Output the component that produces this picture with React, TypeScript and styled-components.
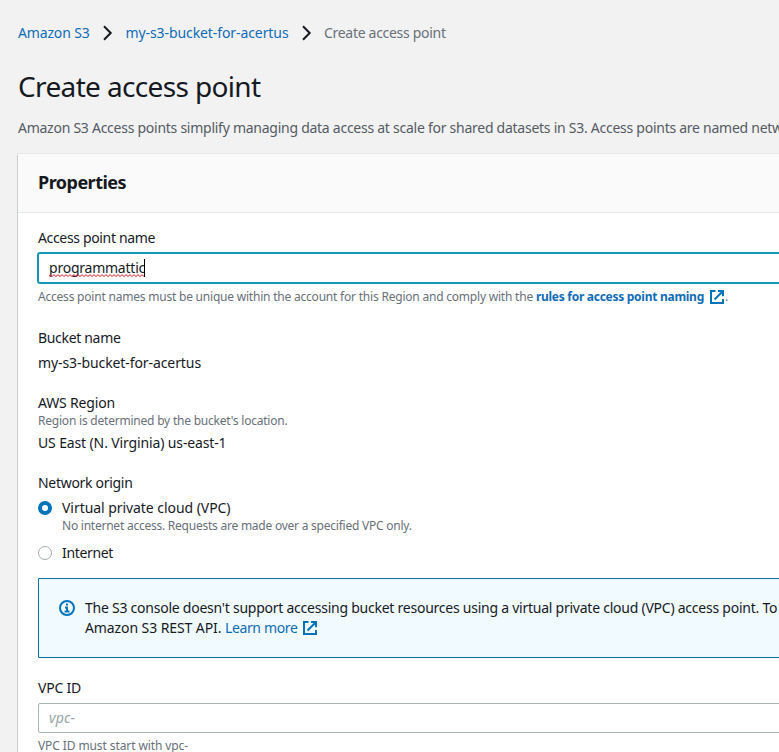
import React from "react";
import styled, { createGlobalStyle } from "styled-components";

const GlobalStyle = createGlobalStyle`
  * { box-sizing: border-box; }
  body { margin: 0; background: #f2f2f2; }
`;

const Page = styled.main`
  width: 100%;
  height: 752px;
  overflow: hidden;
  padding: 23px 0 0 18px;
  background: #f2f2f2;
  color: #16191f;
  font: 14px/20px "Noto Sans", "Open Sans", sans-serif;
  white-space: nowrap;
`;

const Text = styled.span<{ $track?: number }>`
  letter-spacing: ${(p) => p.$track ?? -0.25}px;
`;

const Breadcrumbs = styled.nav`
  display: flex;
  height: 20px;
`;

const Crumb = styled.a<{ $width: number; $track: number }>`
  width: ${(p) => p.$width}px;
  color: #0f6cb6;
  letter-spacing: ${(p) => p.$track}px;
`;

const CurrentCrumb = styled(Text)`
  color: #687078;
`;

const Chevron = styled.svg`
  flex: none;
  width: 10px;
  height: 16px;
  margin: 2px 12.5px 0;
`;

const Title = styled.h1`
  margin: 25px 0 0;
  font-size: 28px;
  line-height: 36px;
  font-weight: 400;
  letter-spacing: -0.64px;
`;

const Intro = styled.p`
  margin: 14px 0 0;
  color: #545b64;
  letter-spacing: -0.26px;
`;

const Panel = styled.section`
  width: 900px;
  margin-top: 16px;
  background: #fff;
  box-shadow: -1px 1px 0 0 #c6cdcc, 0 0 0 1px #e6e7e7;
`;

const PanelHeader = styled.header`
  height: 59px;
  padding: 17px 20px;
  border-bottom: 1px solid #e6e9e9;
  background: #fafafa;
`;

const PanelTitle = styled.h2`
  margin: 0;
  font-size: 18px;
  line-height: 22px;
  font-weight: 700;
  letter-spacing: -0.526px;
`;

const Form = styled.div`
  display: flex;
  flex-direction: column;
  gap: 20px;
  padding: 15px 20px 20px;
`;

const Field = styled.div<{ $after?: number }>`
  display: flex;
  flex-direction: column;
  margin-bottom: ${(p) => p.$after ?? 0}px;
`;

const Label = styled.label<{ $track: number }>`
  height: 20px;
  letter-spacing: ${(p) => p.$track}px;
`;

const Value = styled.div<{ $gap: number; $track: number }>`
  margin-top: ${(p) => p.$gap}px;
  letter-spacing: ${(p) => p.$track}px;
`;

const Hint = styled.div<{ $track: number; $gap?: number }>`
  margin-top: ${(p) => p.$gap ?? 0}px;
  height: 16px;
  color: #687078;
  font-size: 12px;
  line-height: 16px;
  letter-spacing: ${(p) => p.$track}px;
`;

const InputBox = styled.div<{ $focused?: boolean }>`
  display: flex;
  align-items: center;
  height: 30px;
  margin-top: 5px;
  padding: 0 10px;
  border: 1px solid ${(p) => (p.$focused ? "#1299b9" : "#aab3b4")};
  border-radius: 2px;
  box-shadow: ${(p) => (p.$focused ? "0 0 0 1px #1299b9" : "none")};
  background: #fff;
`;

const Typed = styled.span`
  display: grid;
  letter-spacing: -0.232px;
`;

const Stacked = styled.span`
  grid-area: 1 / 1;
`;

const Squiggle = styled.svg`
  grid-area: 1 / 1;
  align-self: end;
  width: 95px;
  height: 3px;
  margin-bottom: 1px;
`;

const Caret = styled.span`
  width: 1px;
  height: 18px;
  margin-left: -1px;
  background: #000;
`;

const Placeholder = styled.span`
  color: #95a5a6;
  font-style: italic;
  letter-spacing: 0.15px;
`;

const RulesLink = styled.a`
  color: #0f6cb6;
  font-weight: 700;
  letter-spacing: -0.275px;
`;

const ExternalSvg = styled.svg<{ $nudge: number }>`
  width: 16px;
  height: 16px;
  margin-left: 5px;
  vertical-align: ${(p) => p.$nudge}px;
`;

const RadioRow = styled.div<{ $gap: number }>`
  display: flex;
  gap: 10px;
  margin-top: ${(p) => p.$gap}px;
`;

const RadioDot = styled.span<{ $checked?: boolean }>`
  flex: none;
  width: 14px;
  height: 14px;
  margin-top: 3px;
  border: ${(p) => (p.$checked ? "4px solid #0073bb" : "1px solid #a3adad")};
  border-radius: 50%;
  background: #fff;
`;

const Alert = styled.div`
  display: flex;
  height: 80px;
  margin-top: -5px;
  padding: 19px 20px;
  border: 1px solid #0b6ea3;
  border-radius: 1px;
  background: #f1faff;
`;

const InfoSvg = styled.svg`
  flex: none;
  width: 16px;
  height: 16px;
  margin: 2px 10px 0 0;
`;

const LearnLink = styled.a`
  color: #0f6cb6;
  letter-spacing: -0.36px;
`;

function Separator() {
  return (
    <Chevron viewBox="0 0 10 16" fill="none" stroke="#16191f" strokeWidth="2">
      <path d="M1 1.2 7.7 8 1 14.8" />
    </Chevron>
  );
}

function ExternalIcon({ nudge }: { nudge: number }) {
  return (
    <ExternalSvg $nudge={nudge} viewBox="0 0 16 16" fill="none" stroke="#0073bb" strokeWidth="2">
      <path d="M6.5 2H2v12h12V10M9 2h5v5.2M13.8 2.2 5.5 10.5" />
    </ExternalSvg>
  );
}

const wave = "M0 2.5" + Array.from({ length: 48 }, (_, i) => `L${i * 2 + 1} ${i % 2 ? 2.5 : 0.7}`).join("");

export default function App() {
  return (
    <Page>
      <GlobalStyle />
      <Breadcrumbs>
        <Crumb $width={72.5} $track={-0.158}>Amazon S3</Crumb>
        <Separator />
        <Crumb $width={163.5} $track={-0.088}>my-s3-bucket-for-acertus</Crumb>
        <Separator />
        <CurrentCrumb $track={-0.3}>Create access point</CurrentCrumb>
      </Breadcrumbs>
      <Title>Create access point</Title>
      <Intro>
        Amazon S3 Access points simplify managing data access at scale for shared datasets in S3. Access points are named
        netw
      </Intro>

      <Panel>
        <PanelHeader>
          <PanelTitle>Properties</PanelTitle>
        </PanelHeader>
        <Form>
          <Field $after={3}>
            <Label $track={-0.345}>Access point name</Label>
            <InputBox $focused>
              <Typed>
                <Stacked>programmattic</Stacked>
                <Squiggle viewBox="0 0 95 3" fill="none" stroke="#d8232a" strokeWidth="1">
                  <path d={wave} />
                </Squiggle>
              </Typed>
              <Caret />
            </InputBox>
            <Hint $track={-0.21} $gap={6}>
              Access point names must be unique within the account for this Region and comply with the{" "}
              <RulesLink>
                rules for access point naming
                <ExternalIcon nudge={-4} />
              </RulesLink>
              .
            </Hint>
          </Field>

          <Field>
            <Label $track={-0.321}>Bucket name</Label>
            <Value $gap={5} $track={-0.088}>my-s3-bucket-for-acertus</Value>
          </Field>

          <Field>
            <Label $track={-0.168}>AWS Region</Label>
            <Hint $track={-0.215}>Region is determined by the bucket's location.</Hint>
            <Value $gap={4} $track={-0.131}>US East (N. Virginia) us-east-1</Value>
          </Field>

          <Field>
            <Label $track={-0.3}>Network origin</Label>
            <RadioRow $gap={5}>
              <RadioDot $checked />
              <Field>
                <Label $track={-0.055}>Virtual private cloud (VPC)</Label>
                <Hint $track={-0.235}>No internet access. Requests are made over a specified VPC only.</Hint>
              </Field>
            </RadioRow>
            <RadioRow $gap={9}>
              <RadioDot />
              <Label $track={-0.341}>Internet</Label>
            </RadioRow>
          </Field>

          <Alert>
            <InfoSvg viewBox="0 0 16 16" fill="none" stroke="#0073bb" strokeWidth="2">
              <circle cx="8" cy="8" r="7" />
              <path d="M6 7.5h2v4M5.5 11.5h5M7 4.5h2" />
            </InfoSvg>
            <div>
              <Text $track={-0.243}>
                The S3 console doesn't support accessing bucket resources using a virtual private cloud (VPC) access
                point. To
              </Text>
              <br />
              <Text $track={-0.09}>Amazon S3 REST API. </Text>
              <LearnLink>
                Learn more
                <ExternalIcon nudge={-3} />
              </LearnLink>
            </div>
          </Alert>

          <Field>
            <Label $track={-0.221}>VPC ID</Label>
            <InputBox>
              <Placeholder>vpc-</Placeholder>
            </InputBox>
            <Hint $track={-0.099} $gap={5}>VPC ID must start with vpc-</Hint>
          </Field>
        </Form>
      </Panel>
    </Page>
  );
}
